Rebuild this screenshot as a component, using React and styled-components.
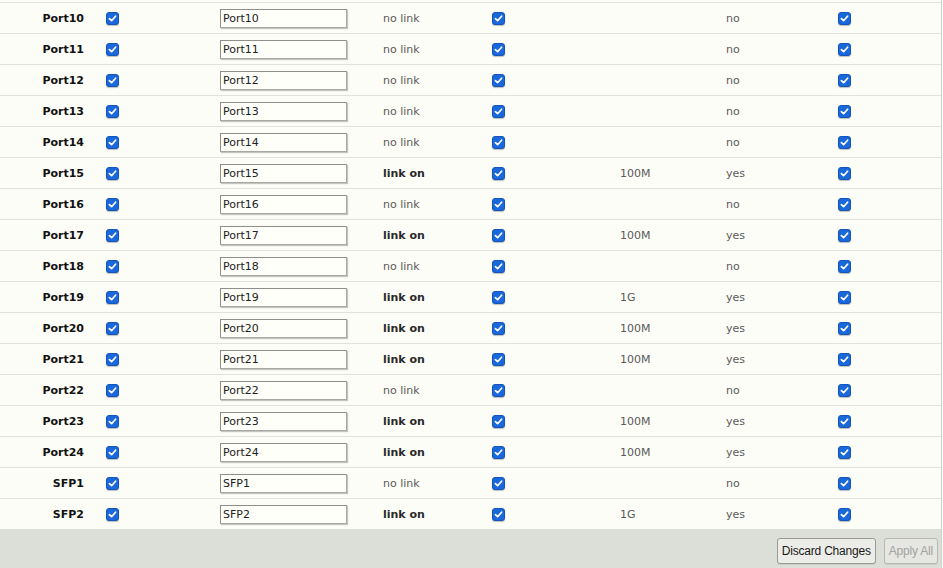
import React from "react";
import styled, { createGlobalStyle } from "styled-components";

const GlobalStyle = createGlobalStyle`
  html, body {
    margin: 0;
    padding: 0;
    background: #fdfdf7;
    overflow: hidden;
  }
  body {
    font-family: "DejaVu Sans", Verdana, sans-serif;
    font-size: 11px;
  }
`;

const Page = styled.div`
  width: 942px;
  height: 568px;
  border-right: 1px solid #d2d2cc;
  display: flex;
  flex-direction: column;
  box-sizing: border-box;
`;

const TopGap = styled.div`
  height: 2px;
`;

const Row = styled.div`
  display: grid;
  grid-template-columns: 92px 128px 163px 109px 128px 106px 112px 1fr;
  align-items: center;
  box-sizing: border-box;
  height: 31px;
  padding-top: 1px;
  border-top: 1px solid #e2e2da;
  background: #fdfdf7;
`;

const NameCell = styled.div`
  text-align: right;
  padding-right: 8px;
  font-weight: bold;
  color: #111;
`;

const CheckCell = styled.div`
  display: flex;
  align-items: center;
  padding-left: ${(p) => p.$pad || 0}px;
  margin-top: -1px;
`;

const TextCell = styled.div`
  color: ${(p) => (p.$strong ? "#2a2a2a" : "#5a5a5a")};
  font-weight: ${(p) => (p.$strong ? "bold" : "normal")};
`;

const NameInput = styled.input`
  display: block;
  box-sizing: border-box;
  width: 127px;
  height: 19px;
  margin: 0;
  padding: 0 2px;
  border: 1px solid #8e8e8a;
  border-right-color: #a8a8a4;
  border-bottom-color: #a8a8a4;
  box-shadow: 1px 1px 1px rgba(0, 0, 0, 0.22);
  background: #fffffa;
  font-family: "DejaVu Sans", Verdana, sans-serif;
  font-size: 11px;
  color: #222;
  outline: none;
`;

const Box = styled.span`
  display: inline-flex;
  align-items: center;
  justify-content: center;
  box-sizing: border-box;
  width: 13px;
  height: 13px;
  border-radius: 3px;
  background: #1a68d9;
  border: 1px solid #1255bd;
  box-shadow: 0 1px 1px rgba(0, 0, 0, 0.25);
`;

const Footer = styled.div`
  flex: 1;
  background: #dcdfd8;
  display: flex;
  justify-content: flex-end;
  align-items: center;
  gap: 8px;
  padding: 0 3px 2px 0;
`;

const Button = styled.button`
  height: 26px;
  padding: 0 4px;
  border: 1px solid ${(p) => (p.disabled ? "#b8b8b4" : "#9a9a96")};
  border-radius: 3px;
  background: ${(p) => (p.disabled ? "#e6e6e2" : "#ecece8")};
  color: ${(p) => (p.disabled ? "#a2a2a0" : "#1a1a1a")};
  font-family: "Liberation Sans", Arial, sans-serif;
  font-size: 12px;
  letter-spacing: -0.2px;
  margin-top: 7px;
  box-shadow: 0 1px 0 rgba(0, 0, 0, 0.08);
`;

const Check = () => (
  <Box>
    <svg width="9" height="9" viewBox="0 0 9 9">
      <path
        d="M1.4 4.6 L3.6 6.7 L7.6 2.2"
        fill="none"
        stroke="#fff"
        strokeWidth="1.7"
        strokeLinecap="round"
        strokeLinejoin="round"
      />
    </svg>
  </Box>
);

const speeds = {
  Port15: "100M",
  Port17: "100M",
  Port19: "1G",
  Port20: "100M",
  Port21: "100M",
  Port23: "100M",
  Port24: "100M",
  SFP2: "1G",
};

const ports = [
  "Port10", "Port11", "Port12", "Port13", "Port14", "Port15", "Port16",
  "Port17", "Port18", "Port19", "Port20", "Port21", "Port22", "Port23",
  "Port24", "SFP1", "SFP2",
];

const PortRow = ({ name }) => {
  const speed = speeds[name];
  const up = Boolean(speed);
  return (
    <Row>
      <NameCell>{name}</NameCell>
      <CheckCell $pad={14}>
        <Check />
      </CheckCell>
      <div>
        <NameInput defaultValue={name} />
      </div>
      <TextCell $strong={up}>{up ? "link on" : "no link"}</TextCell>
      <CheckCell>
        <Check />
      </CheckCell>
      <TextCell>{speed || ""}</TextCell>
      <TextCell>{up ? "yes" : "no"}</TextCell>
      <CheckCell>
        <Check />
      </CheckCell>
    </Row>
  );
};

export default function App() {
  return (
    <>
      <GlobalStyle />
      <Page>
        <TopGap />
        {ports.map((p) => (
          <PortRow key={p} name={p} />
        ))}
        <Footer>
          <Button>Discard Changes</Button>
          <Button disabled>Apply All</Button>
        </Footer>
      </Page>
    </>
  );
}
